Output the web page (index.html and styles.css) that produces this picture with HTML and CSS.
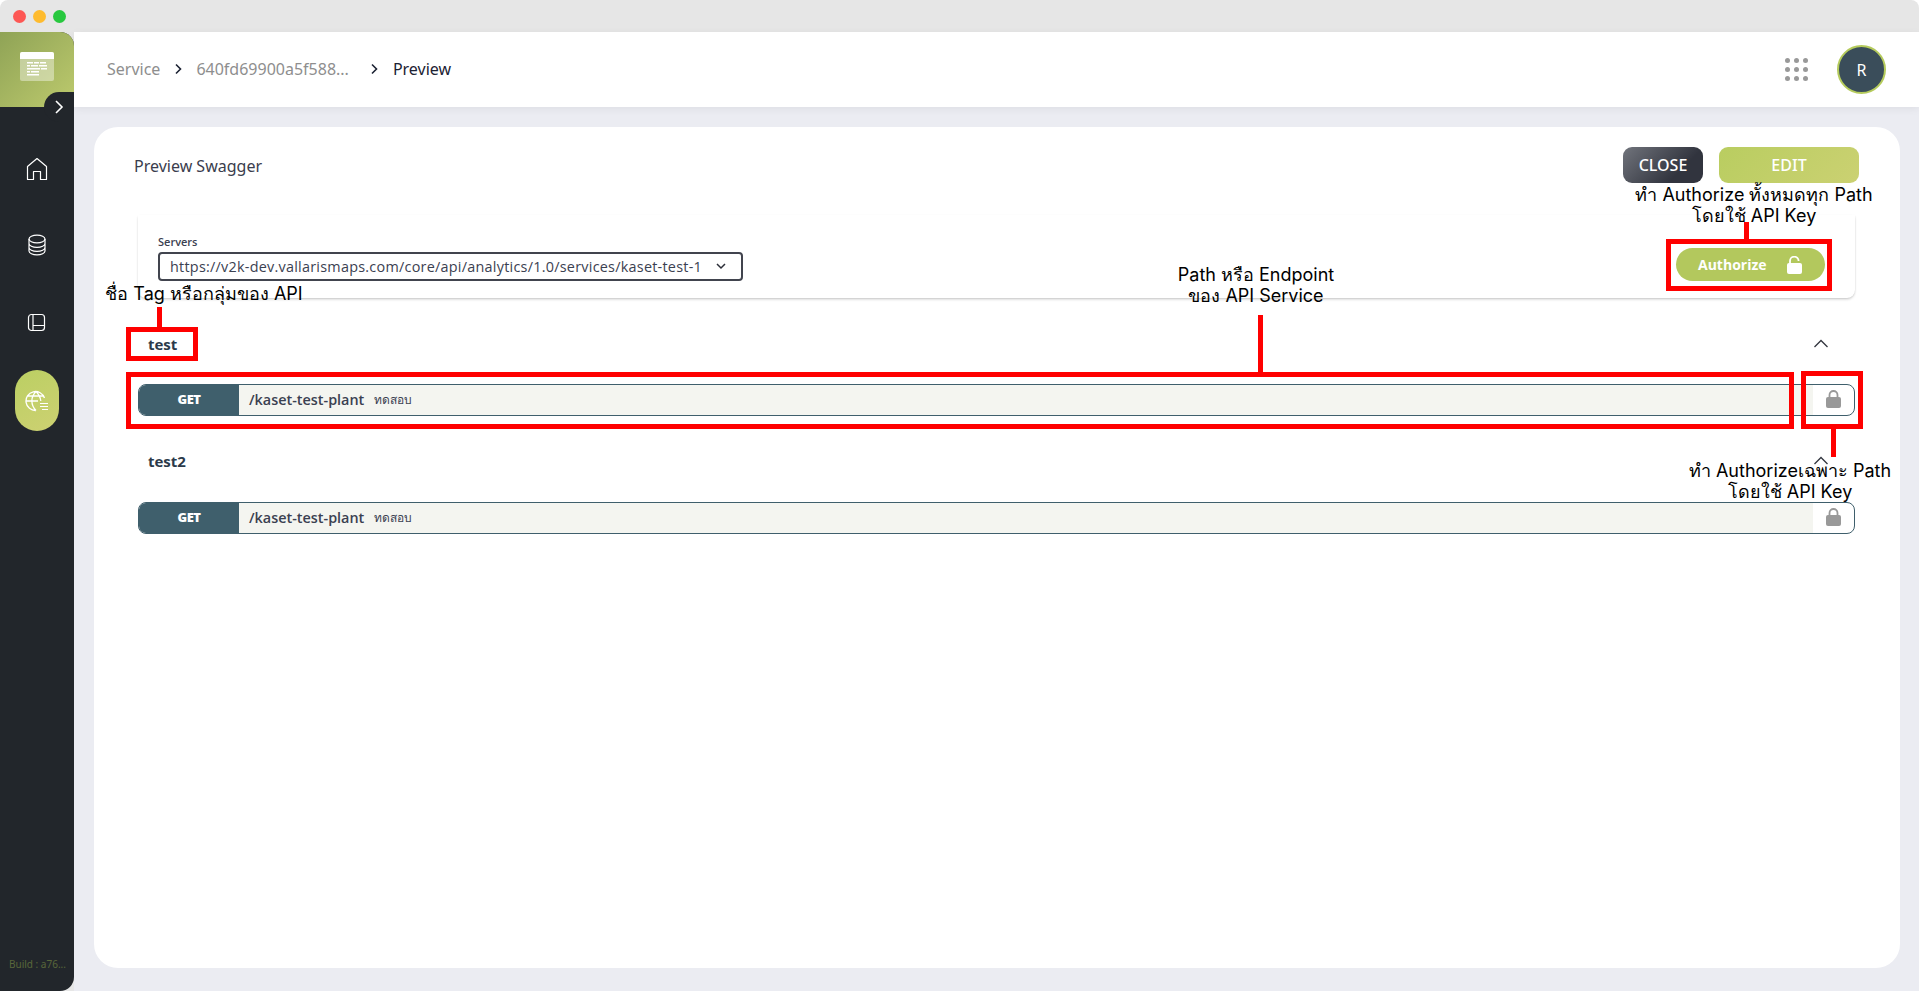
FILE: index.html
```html
<!DOCTYPE html>
<html lang="th">
<head>
<meta charset="utf-8">
<title>Preview Swagger</title>
<link rel="stylesheet" href="styles.css">
</head>
<body>
<div class="app">
  <div class="titlebar">
    <span class="light red"></span><span class="light yellow"></span><span class="light green"></span>
  </div>
  <div class="body">
    <aside class="sidebar">
      <div class="logo">
        <svg class="logo-icon" width="34" height="29" viewBox="0 0 34 29">
          <rect width="34" height="29" rx="2" fill="#fff" fill-opacity=".4"/>
          <path d="M0 7V2a2 2 0 0 1 2-2h30a2 2 0 0 1 2 2v5z" fill="#fff"/>
          <path d="M7 10h6v1.500H7zM14 10h5v1.500h-5zM20 10h6v1.500h-6zM7 13h3v1.500H7zM11 13h7v1.500h-7zM19 13h8v1.500h-8zM7 16h13v1.500H7zM21 16h6v1.500h-6zM7 19h3v1.500H7zM11 19h8v1.500h-8zM7 22h12v1.500H7z" fill="#fff"/>
        </svg>
        <div class="toggle">
          <svg width="12" height="14" viewBox="0 0 12 14"><path d="M3 1l6 6-6 6" fill="none" stroke="#fff" stroke-width="1.600"/></svg>
        </div>
      </div>
      <nav class="nav">
        <svg class="nav-icon" width="22" height="24" viewBox="0 0 22 24"><path d="M1.500 9.500L11 1.500l9.500 8v13h-6v-8h-7v8h-6z" fill="none" stroke="#fff" stroke-width="1.200" stroke-linejoin="round"/></svg>
        <svg class="nav-icon" width="20" height="22" viewBox="0 0 20 22" fill="none" stroke="#fff" stroke-width="1.200"><ellipse cx="10" cy="5" rx="8" ry="3.800"/><path d="M2 5v12c0 2.100 3.600 3.800 8 3.800s8-1.700 8-3.800V5M2 9.500c0 2.100 3.600 3.800 8 3.800s8-1.700 8-3.800M2 13.500c0 2.100 3.600 3.800 8 3.800s8-1.700 8-3.800"/></svg>
        <svg class="nav-icon" width="20" height="20" viewBox="0 0 20 20" fill="none" stroke="#fff" stroke-width="1.200"><rect x="1.500" y="1.500" width="16" height="16" rx="3"/><path d="M6 1.500v16M6 12.500h11.500"/></svg>
        <div class="nav-active">
          <svg width="24" height="22" viewBox="0 0 24 22" fill="none" stroke="#fff" stroke-width="1.300"><path d="M19.500 8A9.500 9.500 0 1 0 11 20.500M1.500 11H13M3 6h16M11 1.500c-5.500 5.500-5.500 13.500 0 19M11 1.500c3 3 4.500 6.500 4.800 9.500"/><path d="M15 13.500h8M15 16.500h8M17 19.500h6" stroke-width="1.200"/></svg>
        </div>
      </nav>
      <div class="build">Build : a76...</div>
    </aside>
    <main class="main">
      <header class="topbar">
        <div class="crumbs">
          <span class="crumb">Service</span>
          <svg class="crumb-sep" width="8" height="12" viewBox="0 0 8 12"><path d="M2 1.500L6.500 6 2 10.500" fill="none" stroke="#1c2233" stroke-width="1.600"/></svg>
          <span class="crumb crumb-id">640fd69900a5f588...</span>
          <svg class="crumb-sep crumb-sep-wide" width="8" height="12" viewBox="0 0 8 12"><path d="M2 1.500L6.500 6 2 10.500" fill="none" stroke="#1c2233" stroke-width="1.600"/></svg>
          <span class="crumb crumb-current">Preview</span>
        </div>
        <div class="top-actions">
          <div class="dots">
            <i></i><i></i><i></i><i></i><i></i><i></i><i></i><i></i><i></i>
          </div>
          <div class="avatar">R</div>
        </div>
      </header>
      <section class="card">
        <div class="card-head">
          <h1 class="card-title">Preview Swagger</h1>
          <div class="card-buttons">
            <button class="btn btn-close">CLOSE</button>
            <button class="btn btn-edit">EDIT</button>
          </div>
        </div>
        <div class="servers">
          <div class="servers-left">
            <div class="servers-label">Servers</div>
            <div class="select">
              <span>https://v2k-dev.vallarismaps.com/core/api/analytics/1.0/services/kaset-test-1</span>
              <svg width="10" height="7" viewBox="0 0 10 7"><path d="M1 1l4 4 4-4" fill="none" stroke="#2b2e38" stroke-width="1.500"/></svg>
            </div>
          </div>
          <button class="authorize">
            <span>Authorize</span>
            <svg width="15" height="18" viewBox="0 0 15 18"><path d="M3 8V5a4.300 4.300 0 0 1 8.600 0" fill="none" stroke="#fff" stroke-width="1.800"/><rect y="7" width="15" height="11" rx="2" fill="#fff"/></svg>
          </button>
        </div>
        <div class="tag">
          <h2 class="tag-name">test</h2>
          <svg width="16" height="9" viewBox="0 0 16 9"><path d="M1.500 8L8 1.500 14.500 8" fill="none" stroke="#33363f" stroke-width="1.300"/></svg>
        </div>
        <div class="op">
          <span class="method">GET</span>
          <div class="op-summary"><span class="op-path">/kaset-test-plant</span><span class="op-desc">ทดสอบ</span></div>
          <div class="op-lock">
            <svg width="15" height="18" viewBox="0 0 15 18"><path d="M3.500 8V5a4 4 0 0 1 8 0v3" fill="none" stroke="#999" stroke-width="1.800"/><rect y="7" width="15" height="11" rx="2" fill="#999"/></svg>
          </div>
        </div>
        <div class="tag tag-second">
          <h2 class="tag-name">test2</h2>
          <svg width="16" height="9" viewBox="0 0 16 9"><path d="M1.500 8L8 1.500 14.500 8" fill="none" stroke="#33363f" stroke-width="1.300"/></svg>
        </div>
        <div class="op">
          <span class="method">GET</span>
          <div class="op-summary"><span class="op-path">/kaset-test-plant</span><span class="op-desc">ทดสอบ</span></div>
          <div class="op-lock">
            <svg width="15" height="18" viewBox="0 0 15 18"><path d="M3.500 8V5a4 4 0 0 1 8 0v3" fill="none" stroke="#999" stroke-width="1.800"/><rect y="7" width="15" height="11" rx="2" fill="#999"/></svg>
          </div>
        </div>
      </section>
    </main>
  </div>

  <div class="mark box-auth"></div>
  <div class="mark box-tag"></div>
  <div class="mark box-path"></div>
  <div class="mark box-lock"></div>
  <div class="line line-auth"></div>
  <div class="line line-tag"></div>
  <div class="line line-path"></div>
  <div class="line line-lock"></div>
  <div class="note note-auth">ทำ Authorize ทั้งหมดทุก Path<br>โดยใช้ API Key</div>
  <div class="note note-tag">ชื่อ Tag หรือกลุ่มของ API</div>
  <div class="note note-path">Path หรือ Endpoint<br>ของ API Service</div>
  <div class="note note-lock">ทำ Authorizeเฉพาะ Path<br>โดยใช้ API Key</div>
</div>
</body>
</html>
```
FILE: styles.css
```css
* { box-sizing: border-box; }
html, body { margin: 0; height: 100%; background: #fff; overflow: hidden; }
body { font-family: "Noto Sans", sans-serif; color: #2f3240; }
button { font-family: inherit; border: 0; padding: 0; }
h1, h2 { margin: 0; font-weight: inherit; }

.app { position: relative; width: 1919px; height: 991px; display: flex; flex-direction: column; }

.titlebar { height: 32px; flex: none; background: #e6e6e6; border-radius: 8px 8px 0 0; display: flex; align-items: center; gap: 7px; padding: 0 0 0 13px; }
.light { width: 13px; height: 13px; border-radius: 50%; }
.red { background: #fd5754; }
.yellow { background: #febb2e; }
.green { background: #28c83f; }

.body { flex: 1; display: flex; min-height: 0; background: #e6e6e6; }

.sidebar { width: 74px; flex: none; background: #22262b; border-radius: 0 14px 14px 0; display: flex; flex-direction: column; position: relative; z-index: 2; }
.logo { position: relative; height: 75px; flex: none; background: linear-gradient(135deg, #8fa356 0%, #bdca6d 100%); border-top-right-radius: 14px; display: flex; justify-content: center; padding-top: 20px; }
.logo-icon { display: block; }
.toggle { position: absolute; right: 0; top: 60px; width: 30px; height: 30px; border-radius: 15px 0 0 15px; background: #22262b; display: flex; align-items: center; justify-content: center; }
.nav { display: flex; flex-direction: column; align-items: center; padding-top: 50px; }
.nav-icon { display: block; }
.nav-icon:nth-child(2) { margin-top: 53px; }
.nav-icon:nth-child(3) { margin-top: 57px; }
.nav-active { width: 44px; height: 61px; margin-top: 37px; border-radius: 22px; background: linear-gradient(150deg, #bbcf63 0%, #cdd172 100%); display: flex; align-items: center; justify-content: center; }
.build { margin-top: auto; padding: 0 0 20px 9px; font-size: 10px; line-height: 14px; color: #59663a; white-space: nowrap; }

.main { flex: 1; min-width: 0; display: flex; flex-direction: column; background: #ebecf2; }
.topbar { height: 75px; flex: none; background: #fff; display: flex; align-items: center; justify-content: space-between; box-shadow: 0 2px 8px rgba(0, 0, 0, .06); padding: 0 33px 2px 33px; position: relative; }
.crumbs { display: flex; align-items: center; font-size: 16px; }
.crumb { color: #8e8e8e; white-space: nowrap; }
.crumb-sep { margin: 0 0 0 14px; }
.crumb-id { margin-left: 14px; }
.crumb-sep-wide { margin-left: 21px; }
.crumb-current { color: #1c2233; margin-left: 15px; }
.top-actions { display: flex; align-items: center; gap: 29px; margin-top: 2px; }
.dots { display: grid; grid-template-columns: repeat(3, 5px); grid-auto-rows: 5px; gap: 4px; }
.dots i { background: #999; border-radius: 50%; }
.avatar { width: 49px; height: 49px; border-radius: 50%; background: #3a4d5a; border: 2px solid #b5cb5c; color: #fff; font-size: 16px; display: flex; align-items: center; justify-content: center; }

.card { width: 1806px; height: 841px; margin: 20px 0 0 20px; background: #fff; border-radius: 24px; padding: 20px 41px 0 44px; flex: none; }
.card-head { display: flex; align-items: center; justify-content: space-between; height: 36px; }
.card-title { font-size: 16px; color: #3a3d4d; margin: 1px 0 0 -4px; }
.card-buttons { display: flex; gap: 16px; }
.btn { height: 36px; border-radius: 9px; color: #fff; font-size: 16px; font-weight: 500; }
.btn-close { width: 80px; background: linear-gradient(135deg, #71747c 0%, #31343e 70%); }
.btn-edit { width: 140px; background: linear-gradient(135deg, #b9cd60 0%, #cbd172 100%); }

.servers { margin: 32px 4px 0 0; height: 83px; border-radius: 0 0 8px 8px; box-shadow: 0 2px 3px -1px rgba(0, 0, 0, .25), 1px 0 2px -1px rgba(0, 0, 0, .12), -1px 0 2px -1px rgba(0, 0, 0, .08); display: flex; justify-content: space-between; align-items: flex-start; padding: 20px 30px 0 20px; background: #fff; }
.servers-label { font-size: 11px; line-height: 15px; color: #3b4151; font-family: "Open Sans", sans-serif; font-weight: 600; margin: -1px 0 3px; }
.select { width: 585px; height: 29px; border: 2px solid #41444e; border-radius: 4px; display: flex; align-items: center; justify-content: space-between; padding: 0 15px 0 10px; font-family: "Open Sans", sans-serif; font-weight: 500; font-size: 14.400px; letter-spacing: .25px; color: #3b4151; white-space: nowrap; }
.authorize { width: 149px; height: 33px; margin-top: 13px; border-radius: 17px; background: #b3c85d; color: #fff; font-family: "Open Sans", sans-serif; font-size: 14px; font-weight: 700; display: flex; align-items: center; justify-content: space-between; padding: 0 23px 0 22px; }

.tag { height: 47px; margin-top: 22px; padding: 0 26px 0 10px; margin-right: 4px; display: flex; align-items: center; justify-content: space-between; color: #3b4151; }
.tag-second { margin-top: 21px; }
.tag-name { font-family: "Open Sans", sans-serif; font-weight: 700; font-size: 15px; color: #2c3a4a; }

.op { margin: 0 4px 0 0; height: 32px; display: flex; border: 1px solid #3f5f6c; border-radius: 8px; overflow: hidden; background: #fff; }
.tag + .op { margin-top: 17px; }
.tag-second + .op { margin-top: 18px; }
.method { width: 100px; flex: none; background: #3f5f6c; color: #fff; font-family: "Open Sans", sans-serif; font-weight: 800; font-size: 13px; letter-spacing: -.5px; display: flex; align-items: center; justify-content: center; padding-bottom: 2px; }
.op-summary { flex: 1; background: #f4f5f0; display: flex; align-items: center; padding: 0 0 2px 10px; font-family: "Open Sans", sans-serif; color: #3b4151; }
.op-path { font-size: 14.400px; font-weight: 600; }
.op-desc { font-size: 12px; margin-left: 10px; font-family: "Noto Sans", sans-serif; }
.op-lock { width: 41px; flex: none; display: flex; align-items: center; justify-content: center; padding-bottom: 2px; }

.mark { position: absolute; border: 5px solid #f00; z-index: 5; }
.line { position: absolute; width: 5px; background: #f00; z-index: 5; }
.box-auth { left: 1666px; top: 239px; width: 166px; height: 52px; }
.box-tag { left: 126px; top: 327px; width: 72px; height: 34px; }
.box-path { left: 126px; top: 372px; width: 1668px; height: 57px; }
.box-lock { left: 1801px; top: 371px; width: 62px; height: 58px; }
.line-auth { left: 1744px; top: 222px; height: 17px; }
.line-tag { left: 157px; top: 307px; height: 20px; }
.line-path { left: 1258px; top: 315px; height: 57px; }
.line-lock { left: 1831px; top: 429px; height: 28px; }

.note { position: absolute; z-index: 6; font-family: Inter, "Noto Sans", sans-serif; font-size: 18px; line-height: 21px; color: #000; text-align: center; white-space: nowrap; transform: translateX(-50%); }
.note-auth { left: 1754px; top: 184px; }
.note-tag { left: 204px; top: 283px; }
.note-path { left: 1256px; top: 264px; }
.note-lock { left: 1790px; top: 460px; }
```
